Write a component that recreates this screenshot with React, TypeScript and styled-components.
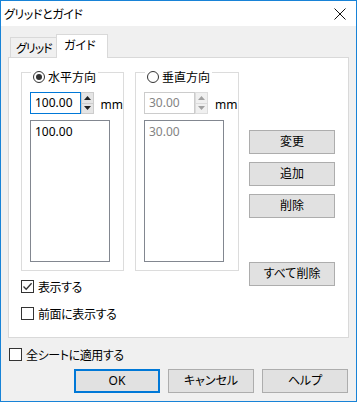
import React, { useState } from 'react';
import styled, { createGlobalStyle, css } from 'styled-components';

const GlobalStyle = createGlobalStyle`
  html, body {
    margin: 0;
    padding: 0;
    background: #ffffff;
  }
  body {
    font-family: "Noto Sans", "Noto Sans CJK JP", sans-serif;
    font-size: 12px;
    color: #000000;
    font-feature-settings: "palt";
  }
  * {
    box-sizing: border-box;
  }
`;

const Window = styled.div`
  width: 357px;
  height: 402px;
  border: 1px solid #1883d7;
  background: #f0f0f0;
  display: flex;
  flex-direction: column;
`;

const TitleBar = styled.div`
  height: 25px;
  background: #ffffff;
  display: flex;
  align-items: center;
  justify-content: space-between;
  padding: 0 8px 0 3px;
  flex-shrink: 0;
`;

const Title = styled.span`
  font-family: "Noto Sans CJK JP", sans-serif;
  font-size: 12px;
  line-height: 16px;
  letter-spacing: -0.4px;
`;

const CloseIcon = styled.svg`
  width: 12px;
  height: 12px;
  margin-right: 2px;
`;

const Body = styled.div`
  padding: 8px 7px 0 7px;
  display: flex;
  flex-direction: column;
`;

const TabRow = styled.div`
  display: flex;
  align-items: flex-end;
  height: 23px;
  margin-left: 2px;
  position: relative;
  z-index: 1;
`;

const Tab = styled.div<{ $active?: boolean }>`
  font-family: "Noto Sans CJK JP", sans-serif;
  font-size: 12px;
  white-space: nowrap;
  overflow: hidden;
  display: flex;
  align-items: center;
  border: 1px solid #d9d9d9;
  ${(p) =>
    p.$active
      ? css`
          height: 24px;
          width: 52px;
          background: #ffffff;
          border-bottom: none;
          margin-bottom: -1px;
          padding: 0 0 4px 7px;
        `
      : css`
          height: 20px;
          width: 46px;
          background: #f0f0f0;
          border-bottom: none;
          border-right: none;
          padding: 0 0 0 5px;
          letter-spacing: -1px;
        `}
`;

const Panel = styled.div`
  width: 341px;
  height: 281px;
  background: #ffffff;
  border: 1px solid #d9d9d9;
  padding: 14px 0 0 12px;
  display: grid;
  grid-template-columns: 218px 86px;
  column-gap: 10px;
`;

const LeftCol = styled.div`
  display: flex;
  flex-direction: column;
`;

const Groups = styled.div`
  display: flex;
  gap: 11px;
`;

const GroupBox = styled.div<{ $width: number }>`
  position: relative;
  width: ${(p) => p.$width}px;
  height: 199px;
  border: 1px solid #dcdcdc;
  padding: 19px 0 0 8px;
  display: flex;
  flex-direction: column;
  gap: 6px;
`;

const Legend = styled.label`
  position: absolute;
  top: -4px;
  left: 9px;
  height: 15px;
  padding: 0 2px 0 2px;
  background: #ffffff;
  display: flex;
  align-items: center;
  gap: 3px;
  font-family: "Noto Sans CJK JP", sans-serif;
  font-size: 12px;
  line-height: 15px;
`;

const RadioCircle = styled.span<{ $checked?: boolean }>`
  width: 12px;
  height: 12px;
  border-radius: 50%;
  border: 1px solid #333333;
  background: #ffffff;
  display: flex;
  align-items: center;
  justify-content: center;
  &::after {
    content: '';
    width: 6px;
    height: 6px;
    border-radius: 50%;
    background: ${(p) => (p.$checked ? '#333333' : 'transparent')};
  }
`;

const InputRow = styled.div`
  display: flex;
  align-items: center;
  height: 22px;
`;

const NumberBox = styled.div<{ $disabled?: boolean }>`
  width: 51px;
  height: 22px;
  border: 1px solid ${(p) => (p.$disabled ? '#cccccc' : '#0078d7')};
  background: #ffffff;
  color: ${(p) => (p.$disabled ? '#838383' : '#000000')};
  font-family: "Noto Sans", sans-serif;
  font-size: 12px;
  line-height: 20px;
  padding-left: 4px;
`;

const Spinner = styled.div`
  width: 13px;
  height: 22px;
  display: flex;
  flex-direction: column;
`;

const SpinHalf = styled.div<{ $disabled?: boolean }>`
  flex: 1;
  background: ${(p) => (p.$disabled ? '#f0f0f0' : '#e5e5e5')};
  border: 1px solid ${(p) => (p.$disabled ? '#dcdcdc' : '#cccccc')};
  display: flex;
  align-items: center;
  justify-content: center;
  &:first-child {
    border-bottom: none;
  }
`;

const Arrow = styled.svg`
  width: 7px;
  height: 4px;
`;

const Unit = styled.span`
  margin-left: 7px;
  font-family: "Noto Sans", sans-serif;
  font-size: 12px;
  padding-top: 2px;
`;

const ListBox = styled.div<{ $disabled?: boolean }>`
  width: 80px;
  height: 142px;
  border: 1px solid #828790;
  background: #ffffff;
  padding: 3px 0 0 4px;
  color: ${(p) => (p.$disabled ? '#838383' : '#000000')};
  font-family: "Noto Sans", sans-serif;
  font-size: 12px;
  line-height: 15px;
`;

const CheckList = styled.div`
  display: flex;
  flex-direction: column;
  gap: 14px;
  margin-top: 9px;
`;

const CheckRow = styled.label`
  display: flex;
  align-items: center;
  gap: 4px;
  height: 13px;
  font-family: "Noto Sans CJK JP", sans-serif;
  font-size: 12px;
  line-height: 15px;
  letter-spacing: -0.4px;
`;

const CheckBox = styled.span`
  width: 13px;
  height: 13px;
  border: 1px solid #333333;
  background: #ffffff;
  display: flex;
  align-items: center;
  justify-content: center;
  flex-shrink: 0;
`;

const ButtonCol = styled.div`
  display: flex;
  flex-direction: column;
  gap: 8px;
  padding-top: 58px;
`;

const Button = styled.button<{ $default?: boolean; $width?: number }>`
  width: ${(p) => p.$width ?? 86}px;
  height: 24px;
  background: #e1e1e1;
  border: ${(p) => (p.$default ? '2px solid #0078d7' : '1px solid #adadad')};
  border-radius: 0;
  padding: 0;
  font-family: "Noto Sans", "Noto Sans CJK JP", sans-serif;
  font-feature-settings: "palt";
  font-size: 12px;
  color: #000000;
  line-height: 16px;
`;

const Spacer = styled.div<{ $h: number }>`
  height: ${(p) => p.$h}px;
`;

const ApplyRow = styled.div`
  margin-top: 10px;
  margin-left: 1px;
`;

const Footer = styled.div`
  display: flex;
  justify-content: flex-end;
  gap: 8px;
  margin-top: 8px;
  padding-right: 1px;
`;

const Check = () => (
  <svg width="11" height="11" viewBox="0 0 11 11">
    <path d="M1.5 5.5 L4.2 8.3 L9.6 2.2" fill="none" stroke="#333333" strokeWidth="1.3" />
  </svg>
);

const Up = ({ color }: { color: string }) => (
  <Arrow viewBox="0 0 7 4">
    <path d="M0 4 L3.5 0 L7 4 Z" fill={color} />
  </Arrow>
);

const Down = ({ color }: { color: string }) => (
  <Arrow viewBox="0 0 7 4">
    <path d="M0 0 L7 0 L3.5 4 Z" fill={color} />
  </Arrow>
);

const GuideGroup = ({
  label,
  value,
  width,
  active,
}: {
  label: string;
  value: string;
  width: number;
  active: boolean;
}) => {
  const arrowColor = active ? '#222222' : '#a0a0a0';
  return (
    <GroupBox $width={width}>
      <Legend>
        <RadioCircle $checked={active} />
        {label}
      </Legend>
      <InputRow>
        <NumberBox $disabled={!active}>{value}</NumberBox>
        <Spinner>
          <SpinHalf $disabled={!active}>
            <Up color={arrowColor} />
          </SpinHalf>
          <SpinHalf $disabled={!active}>
            <Down color={arrowColor} />
          </SpinHalf>
        </Spinner>
        <Unit>mm</Unit>
      </InputRow>
      <ListBox $disabled={!active}>{value}</ListBox>
    </GroupBox>
  );
};

export default function App() {
  const [tab] = useState('guide');

  return (
    <>
      <GlobalStyle />
      <Window>
        <TitleBar>
          <Title>グリッドとガイド</Title>
          <CloseIcon viewBox="0 0 12 12">
            <path d="M0.5 0.5 L11.5 11.5 M11.5 0.5 L0.5 11.5" stroke="#111111" strokeWidth="1" />
          </CloseIcon>
        </TitleBar>
        <Body>
          <TabRow>
            <Tab $active={tab === 'grid'}>グリッド</Tab>
            <Tab $active={tab === 'guide'}>ガイド</Tab>
          </TabRow>
          <Panel>
            <LeftCol>
              <Groups>
                <GuideGroup label="水平方向" value="100.00" width={103} active />
                <GuideGroup label="垂直方向" value="30.00" width={104} active={false} />
              </Groups>
              <CheckList>
                <CheckRow>
                  <CheckBox>
                    <Check />
                  </CheckBox>
                  表示する
                </CheckRow>
                <CheckRow>
                  <CheckBox />
                  前面に表示する
                </CheckRow>
              </CheckList>
            </LeftCol>
            <ButtonCol>
              <Button>変更</Button>
              <Button>追加</Button>
              <Button>削除</Button>
              <Spacer $h={28} />
              <Button>すべて削除</Button>
            </ButtonCol>
          </Panel>
          <ApplyRow>
            <CheckRow>
              <CheckBox />
              全シートに適用する
            </CheckRow>
          </ApplyRow>
          <Footer>
            <Button $default>OK</Button>
            <Button>キャンセル</Button>
            <Button>ヘルプ</Button>
          </Footer>
        </Body>
      </Window>
    </>
  );
}
